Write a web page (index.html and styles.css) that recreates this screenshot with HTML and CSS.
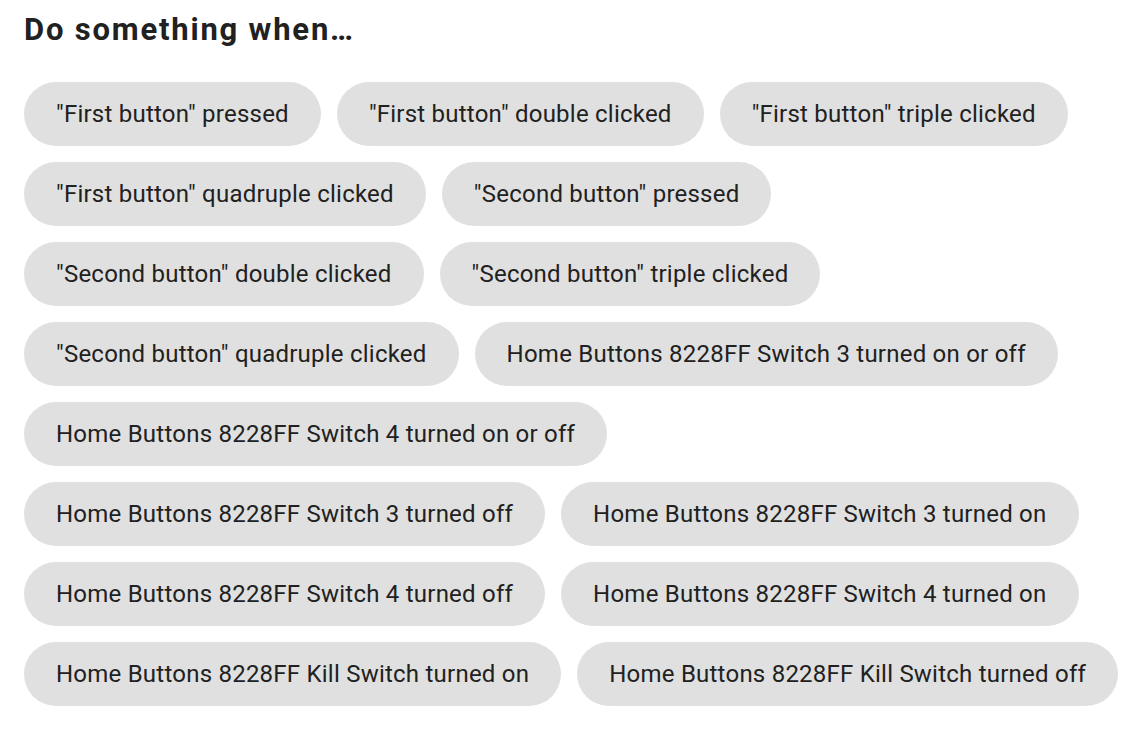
FILE: index.html
```html
<!DOCTYPE html>
<html>
<head>
<meta charset="utf-8">
<link rel="stylesheet" href="styles.css">
</head>
<body>
<div class="page">
  <h2 class="title">Do something when…</h2>
  <div class="chips">
    <div class="chip">"First button" pressed</div>
    <div class="chip">"First button" double clicked</div>
    <div class="chip">"First button" triple clicked</div>
    <div class="chip">"First button" quadruple clicked</div>
    <div class="chip">"Second button" pressed</div>
    <div class="chip">"Second button" double clicked</div>
    <div class="chip">"Second button" triple clicked</div>
    <div class="chip">"Second button" quadruple clicked</div>
    <div class="chip">Home Buttons 8228FF Switch 3 turned on or off</div>
    <div class="chip">Home Buttons 8228FF Switch 4 turned on or off</div>
    <div class="chip">Home Buttons 8228FF Switch 3 turned off</div>
    <div class="chip">Home Buttons 8228FF Switch 3 turned on</div>
    <div class="chip">Home Buttons 8228FF Switch 4 turned off</div>
    <div class="chip">Home Buttons 8228FF Switch 4 turned on</div>
    <div class="chip">Home Buttons 8228FF Kill Switch turned on</div>
    <div class="chip">Home Buttons 8228FF Kill Switch turned off</div>
  </div>
</div>
</body>
</html>
```
FILE: styles.css
```css
html, body {
  margin: 0;
  padding: 0;
  background: #ffffff;
}
body {
  font-family: Roboto, "Noto Sans", sans-serif;
  color: #212121;
}
.page {
  padding: 0 8px 0 24px;
}
.title {
  margin: 0;
  padding-top: 10px;
  font-size: 31px;
  line-height: 40px;
  font-weight: 700;
  letter-spacing: 1.8px;
  color: #212121;
}
.chips {
  display: flex;
  flex-wrap: wrap;
  gap: 16px;
  margin-top: 32px;
}
.chip {
  height: 64px;
  line-height: 65px;
  padding: 0 32px;
  border-radius: 32px;
  background: #e0e0e0;
  font-size: 24px;
  letter-spacing: 0.23px;
  color: #212121;
  white-space: nowrap;
}
```
